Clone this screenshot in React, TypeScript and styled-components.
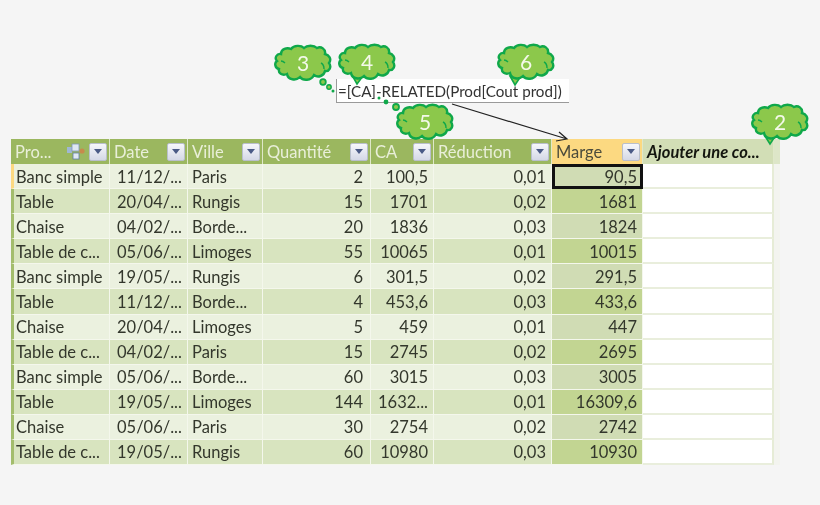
import React from 'react';
import styled, { createGlobalStyle } from 'styled-components';

const GlobalStyle = createGlobalStyle`
  html, body {
    margin: 0;
    padding: 0;
    background: #f5f5f5;
  }
`;

const Page = styled.div`
  position: relative;
  width: 820px;
  height: 505px;
  padding: 139px 0 0 11px;
  box-sizing: border-box;
  overflow: hidden;
  background: #f5f5f5;
  font-family: Lato, "Open Sans", sans-serif;
  color: #33372c;
  filter: blur(0.45px);
`;

const COLUMNS = '99px 78px 75px 108px 63px 118px 91px 131px 6px';

const Table = styled.div`
  display: grid;
  grid-template-columns: ${COLUMNS};
  grid-auto-rows: 25.08px;
  width: 769px;
`;

const HeaderCell = styled.div<{ $kind?: 'active' | 'add' }>`
  display: flex;
  align-items: center;
  gap: 3px;
  height: 25px;
  padding: 0 2px 0 4px;
  box-sizing: border-box;
  border-right: 1px solid #dfe8c9;
  font-size: 16.5px;
  white-space: nowrap;
  color: ${p => (p.$kind === 'active' ? '#4c4c3c' : p.$kind === 'add' ? '#14160f' : '#e9efd9')};
  background: ${p => (p.$kind === 'active' ? '#fcd981' : p.$kind === 'add' ? '#d2deb6' : '#9bb75f')};
  font-weight: ${p => (p.$kind === 'add' ? 700 : 400)};
  font-style: ${p => (p.$kind === 'add' ? 'italic' : 'normal')};
`;

const HeaderLabel = styled.span`
  flex: 1;
`;

const FilterButton = styled.span`
  display: flex;
  align-items: center;
  justify-content: center;
  width: 18px;
  height: 18px;
  box-sizing: border-box;
  border: 1px solid #b9bfcc;
  border-radius: 2px;
  background: linear-gradient(#f6f7fb, #d4d8e6);
  &::after {
    content: '';
    border-left: 4px solid transparent;
    border-right: 4px solid transparent;
    border-top: 5px solid #4a5a86;
  }
`;

const Cell = styled.div<{ $shade: 'light' | 'dark'; $column: number; $selected?: boolean }>`
  display: flex;
  align-items: center;
  justify-content: ${p => (p.$column >= 3 ? 'flex-end' : 'flex-start')};
  min-width: 0;
  padding: 1px ${p => (p.$column === 3 ? '7px' : p.$column >= 3 ? '5px' : '0')} 0 ${p => (p.$column === 0 ? '2px' : p.$column === 1 ? '7px' : '4px')};
  box-sizing: border-box;
  font-size: 16.5px;
  white-space: nowrap;
  overflow: hidden;
  background: ${p =>
    p.$column === 6
      ? p.$shade === 'light'
        ? '#d0dcb4'
        : '#c2d592'
      : p.$shade === 'dark'
        ? '#d8e4bf'
        : '#ebf1df'};
  border-right: 1px solid #f4f7ec;
  border-bottom: 1px solid #f4f7ec;
  border-left: ${p => (p.$column === 0 ? `3px solid ${p.$selected ? '#fcd981' : '#a3bd6c'}` : 'none')};
  outline: ${p => (p.$selected && p.$column === 6 ? '3px solid #111' : 'none')};
  outline-offset: -3px;
`;

const EmptyCell = styled.div`
  background: #fff;
  border-right: 2px solid #e6ecd6;
  border-bottom: 2px solid #e9eedc;
  box-sizing: border-box;
`;

const Stripe = styled.div<{ $header?: boolean }>`
  background: ${p => (p.$header ? '#dde6c8' : '#f3f4ef')};
`;

const FormulaBox = styled.div`
  position: absolute;
  left: 336px;
  top: 79px;
  width: 233px;
  height: 24px;
  padding-left: 1px;
  box-sizing: border-box;
  display: flex;
  align-items: center;
  background: #fff;
  border-left: 1px solid #9a9a9a;
  border-bottom: 1px solid #9a9a9a;
  font-size: 15.2px;
  color: #333;
  white-space: nowrap;
`;

const Overlay = styled.svg`
  position: absolute;
  left: 0;
  top: 0;
  pointer-events: none;
`;

const CloudWrap = styled.div<{ $x: number; $y: number }>`
  position: absolute;
  left: ${p => p.$x}px;
  top: ${p => p.$y}px;
  width: 58px;
  height: 38px;
  display: flex;
  align-items: center;
  justify-content: center;
  color: #f4f9ea;
  font-size: 21px;
`;

const CloudShape = styled.svg`
  position: absolute;
  inset: 0;
`;

const CloudNumber = styled.span`
  position: relative;
  margin-top: -1px;
`;

const cloudPath =
  'M7 10 C7 5 13 3 17 5 C20 1 27 1 30 4 C33 1 40 1 43 4 C47 2 52 5 51 10 C55 11 58 15 55 19 C58 23 55 28 51 27 C50 32 44 34 40 31 C37 37 29 37 26 33 C22 37 14 36 13 30 C8 32 4 29 5 25 C1 24 0 19 3 17 C0 14 3 9 7 10 Z';

const Cloud: React.FC<{ x: number; y: number; label: string }> = ({ x, y, label }) => (
  <CloudWrap $x={x} $y={y}>
    <CloudShape width="58" height="38" viewBox="0 0 58 38">
      <path d={cloudPath} fill="#8cc84b" stroke="#0fa84a" strokeWidth="2.4" />
      <path d="M47 19 C49 20 50 22 50 25 M7 17 C9 17 10 18 11 19" fill="none" stroke="#0fa84a" strokeWidth="1.4" />
    </CloudShape>
    <CloudNumber>{label}</CloudNumber>
  </CloudWrap>
);

const ProductIcon = () => (
  <svg width="19" height="17" viewBox="0 0 19 17">
    <rect x="0" y="4" width="5" height="6" fill="#9fb7d3" />
    <rect x="5" y="1" width="7" height="7" fill="#dfe8f3" stroke="#7e97b8" strokeWidth="0.8" />
    <rect x="6" y="10" width="6" height="6" fill="#dfe8f3" stroke="#5f7da5" strokeWidth="0.8" />
    <circle cx="15" cy="8" r="2.6" fill="#c78a4c" />
  </svg>
);

const headers = ['Pro...', 'Date', 'Ville', 'Quantité', 'CA', 'Réduction'];

const rows = [
  ['Banc simple', '11/12/...', 'Paris', '2', '100,5', '0,01', '90,5'],
  ['Table', '20/04/...', 'Rungis', '15', '1701', '0,02', '1681'],
  ['Chaise', '04/02/...', 'Borde...', '20', '1836', '0,03', '1824'],
  ['Table de c...', '05/06/...', 'Limoges', '55', '10065', '0,01', '10015'],
  ['Banc simple', '19/05/...', 'Rungis', '6', '301,5', '0,02', '291,5'],
  ['Table', '11/12/...', 'Borde...', '4', '453,6', '0,03', '433,6'],
  ['Chaise', '20/04/...', 'Limoges', '5', '459', '0,01', '447'],
  ['Table de c...', '04/02/...', 'Paris', '15', '2745', '0,02', '2695'],
  ['Banc simple', '05/06/...', 'Borde...', '60', '3015', '0,03', '3005'],
  ['Table', '19/05/...', 'Limoges', '144', '1632...', '0,01', '16309,6'],
  ['Chaise', '05/06/...', 'Paris', '30', '2754', '0,02', '2742'],
  ['Table de c...', '19/05/...', 'Rungis', '60', '10980', '0,03', '10930'],
];

export default function App() {
  return (
    <Page>
      <GlobalStyle />
      <Table>
        {headers.map((h, i) => (
          <HeaderCell key={h}>
            <HeaderLabel>{h}</HeaderLabel>
            {i === 0 && <ProductIcon />}
            <FilterButton />
          </HeaderCell>
        ))}
        <HeaderCell $kind="active">
          <HeaderLabel>Marge</HeaderLabel>
          <FilterButton />
        </HeaderCell>
        <HeaderCell $kind="add">Ajouter une co...</HeaderCell>
        <Stripe $header />
        {rows.map((row, r) => {
          const shade = r % 2 === 0 ? 'light' : 'dark';
          return (
            <React.Fragment key={r}>
              {row.map((value, c) => (
                <Cell key={c} $shade={shade} $column={c} $selected={r === 0}>
                  {value}
                </Cell>
              ))}
              <EmptyCell />
              <Stripe />
            </React.Fragment>
          );
        })}
      </Table>
      <Overlay width="820" height="505" viewBox="0 0 820 505">
        <path d="M452 104 L567 139 M559 132 L567 139 L556 141" fill="none" stroke="#222" strokeWidth="1.2" />
      </Overlay>
      <FormulaBox>=[CA]-RELATED(Prod[Cout prod])</FormulaBox>
      <Overlay width="820" height="505" viewBox="0 0 820 505">
        <circle cx="323" cy="82" r="2.8" fill="#8cc84b" stroke="#0fa84a" strokeWidth="1.8" />
        <circle cx="329" cy="87" r="2.2" fill="#8cc84b" stroke="#0fa84a" strokeWidth="1.4" />
        <circle cx="333" cy="91" r="1.5" fill="#0fa84a" />
        <circle cx="396" cy="107" r="3" fill="#8cc84b" stroke="#0fa84a" strokeWidth="1.8" />
        <circle cx="386" cy="102" r="2.4" fill="#0fa84a" />
        <circle cx="379" cy="98" r="1.5" fill="#0fa84a" />
        <path d="M352 75 L357 84 L363 76 Z" fill="#8cc84b" stroke="#0fa84a" strokeWidth="1.6" />
        <path d="M510 76 L515 85 L521 76 Z" fill="#8cc84b" stroke="#0fa84a" strokeWidth="1.6" />
        <path d="M765 136 L770 144 L776 135 Z" fill="#8cc84b" stroke="#0fa84a" strokeWidth="1.6" />
      </Overlay>
      <Cloud x={274} y={44} label="3" />
      <Cloud x={338} y={43} label="4" />
      <Cloud x={497} y={43} label="6" />
      <Cloud x={396} y={103} label="5" />
      <Cloud x={751} y={103} label="2" />
    </Page>
  );
}
